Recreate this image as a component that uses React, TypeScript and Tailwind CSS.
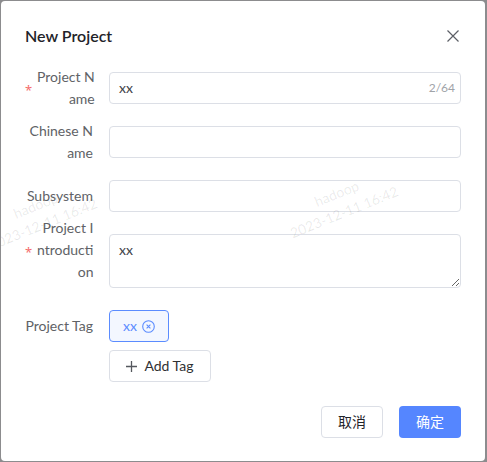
import React from "react";

const FieldLabel = ({ lines, required }: { lines: string[]; required?: boolean }) => {
  return (
    <div className="flex h-8 w-[68px] shrink-0 items-center text-sm leading-[22px] text-[#606266]">
      {required && (
        <span className="mt-[4px] w-3 shrink-0 font-['Noto_Sans',sans-serif] text-[13px] text-[#f56c6c]">*</span>
      )}
      <div className="flex-1 text-right whitespace-nowrap">
        {lines.map((l) => (
          <div key={l}>{l}</div>
        ))}
      </div>
    </div>
  );
};

const Watermark = ({ className }: { className: string }) => (
  <div
    className={`pointer-events-none absolute -rotate-[22deg] text-center text-[14px] leading-[20px] text-[#000000]/[0.09] ${className}`}
  >
    <div>hadoop</div>
    <div>2023-12-11 16:42</div>
  </div>
);

export default function App() {
  return (
    <div className="h-[462px] w-[487px] bg-[#8c8c8e] pb-px pl-px pr-[2px] pt-px font-['Lato','Noto_Sans_CJK_SC',sans-serif]">
      <div className="relative h-full overflow-hidden rounded-[4px] bg-white px-6 pt-[23px]">
        <div className="flex h-6 items-center justify-between">
          <h2 className="text-base font-semibold text-[#1f2329]">New Project</h2>
          <svg width="12" height="12" viewBox="0 0 12 12" className="mr-[2px]">
            <path d="M0.5 0.5 L11.5 11.5 M11.5 0.5 L0.5 11.5" stroke="#5c5f66" strokeWidth="1.2" />
          </svg>
        </div>

        <div className="mt-6 flex flex-col">
          <div className="mb-[22px] flex">
            <FieldLabel lines={["Project N", "ame"]} required />
            <div className="ml-4 flex h-8 flex-1 items-center justify-between rounded border border-[#dcdfe6] pl-[9px] pr-[5px] text-sm text-[#404348]">
              <span>xx</span>
              <span className="text-xs text-[#a0a3a8]">2/64</span>
            </div>
          </div>

          <div className="mb-[22px] flex">
            <FieldLabel lines={["Chinese N", "ame"]} />
            <div className="ml-4 h-8 flex-1 rounded border border-[#dcdfe6]" />
          </div>

          <div className="mb-[22px] flex">
            <FieldLabel lines={["Subsystem"]} />
            <div className="ml-4 h-8 flex-1 rounded border border-[#dcdfe6]" />
          </div>

          <div className="mb-[22px] flex">
            <FieldLabel lines={["Project I", "ntroducti", "on"]} required />
            <textarea
              readOnly
              defaultValue="xx"
              className="ml-4 h-[54px] flex-1 resize-y rounded border border-[#dcdfe6] px-[9px] py-[4px] text-sm leading-[22px] text-[#404348] outline-none"
            />
          </div>

          <div className="flex">
            <FieldLabel lines={["Project Tag"]} />
            <div className="ml-4 flex flex-col items-start gap-2">
              <div className="flex h-8 w-[60px] items-center justify-center gap-[5px] rounded border border-[#5b8cff] bg-[#f3f7ff] text-sm text-[#5b8cff]">
                <span>xx</span>
                <svg width="13" height="13" viewBox="0 0 13 13">
                  <circle cx="6.5" cy="6.5" r="5.8" fill="none" stroke="#5b8cff" strokeWidth="1.1" />
                  <path d="M4.6 4.6 L8.4 8.4 M8.4 4.6 L4.6 8.4" stroke="#5b8cff" strokeWidth="1.1" />
                </svg>
              </div>
              <button className="flex h-8 w-[102px] items-center justify-center gap-[7px] rounded border border-[#dcdfe6] bg-white text-sm text-[#303133]">
                <svg width="11" height="11" viewBox="0 0 11 11">
                  <path d="M5.5 0 V11 M0 5.5 H11" stroke="#55585e" strokeWidth="1.3" />
                </svg>
                <span>Add Tag</span>
              </button>
            </div>
          </div>
        </div>

        <div className="mt-6 flex justify-end gap-4">
          <button className="h-8 w-[62px] rounded border border-[#dcdfe6] bg-white text-sm text-[#1f2329]">取消</button>
          <button className="h-8 w-[62px] rounded bg-[#5586ff] text-sm text-white">确定</button>
        </div>

        <Watermark className="left-[282px] top-[182px]" />
        <Watermark className="-left-[19px] top-[194px]" />
      </div>
    </div>
  );
}
